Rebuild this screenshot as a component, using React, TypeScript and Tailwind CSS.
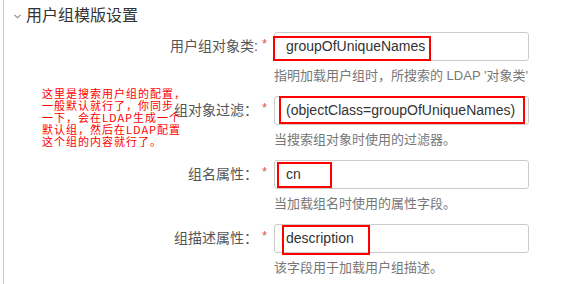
const font = { fontFamily: '"Liberation Sans", Arial, "Noto Sans CJK SC", sans-serif' };

interface RowProps {
  label: string;
  value: string;
  help: string;
  box: { left: number; top: number; width: number; height: number };
}

const note = [
  "这里是搜索用户组的配置，",
  "一般默认就行了，你同步",
  "一下，会在LDAP生成一个",
  "默认组，然后在LDAP配置",
  "这个组的内容就行了。",
];

// red annotation rectangles lie over the inputs
function FieldRow({ label, value, help, box }: RowProps) {
  return (
    <div className="flex h-[64px]">
      <div className="w-[254px] shrink-0 h-[29px] flex items-center justify-end text-[14px] text-[#555]">
        {label}
      </div>
      <div className="w-[16px] shrink-0 text-[#d9534f] text-[13px] leading-none pt-[5px] pl-[4px]">*</div>
      <div className="w-[255px] shrink-0">
        <div className="relative h-[29px] border border-[#ccc] rounded-[3px] flex items-center pl-[11px] text-[14px] text-[#333] bg-white">
          {value}
          <div
            className="absolute border-2 border-[#ff0000]"
            style={{ left: box.left, top: box.top, width: box.width, height: box.height }}
          />
        </div>
        <div className="mt-[6px] text-[13px] leading-[18px] text-[#777] whitespace-nowrap">{help}</div>
      </div>
    </div>
  );
}

export default function App() {
  return (
    <div className="relative w-[573px] h-[284px] bg-white overflow-hidden" style={font}>
      <div className="ml-[3px] h-full border-l border-[#ccc]">
        <div className="flex items-center h-[30px] pt-[2px]">
          <svg className="ml-[10px] mr-[5px]" width="7" height="5" viewBox="0 0 7 5" fill="none">
            <path d="M0.5 0.8 L3.5 3.8 L6.5 0.8" stroke="#888" strokeWidth="1.1" />
          </svg>
          <span className="text-[16px] text-[#333]">用户组模版设置</span>
        </div>
        <div className="pt-[2px]">
          <FieldRow
            label="用户组对象类:"
            value="groupOfUniqueNames"
            help="指明加载用户组时，所搜索的 LDAP '对象类'"
            box={{ left: -2, top: 3, width: 158, height: 25 }}
          />
          <FieldRow
            label="组对象过滤："
            value="(objectClass=groupOfUniqueNames)"
            help="当搜索组对象时使用的过滤器。"
            box={{ left: 4, top: -1, width: 246, height: 28 }}
          />
          <FieldRow
            label="组名属性："
            value="cn"
            help="当加载组名时使用的属性字段。"
            box={{ left: 2, top: 1, width: 55, height: 26 }}
          />
          <FieldRow
            label="组描述属性："
            value="description"
            help="该字段用于加载用户组描述。"
            box={{ left: 7, top: 0, width: 88, height: 30 }}
          />
        </div>
      </div>
      {/* handwritten-style annotation laid over the form */}
      <div
        className="absolute left-[42px] top-[87px] flex flex-col items-start text-[11px] leading-[12px] tracking-[1px] text-[#ff0000]"
        style={{ fontFamily: '"Noto Sans CJK SC", sans-serif' }}
      >
        {note.map((line) => (
          <span key={line} className="h-[12px] whitespace-nowrap">{line}</span>
        ))}
      </div>
    </div>
  );
}
